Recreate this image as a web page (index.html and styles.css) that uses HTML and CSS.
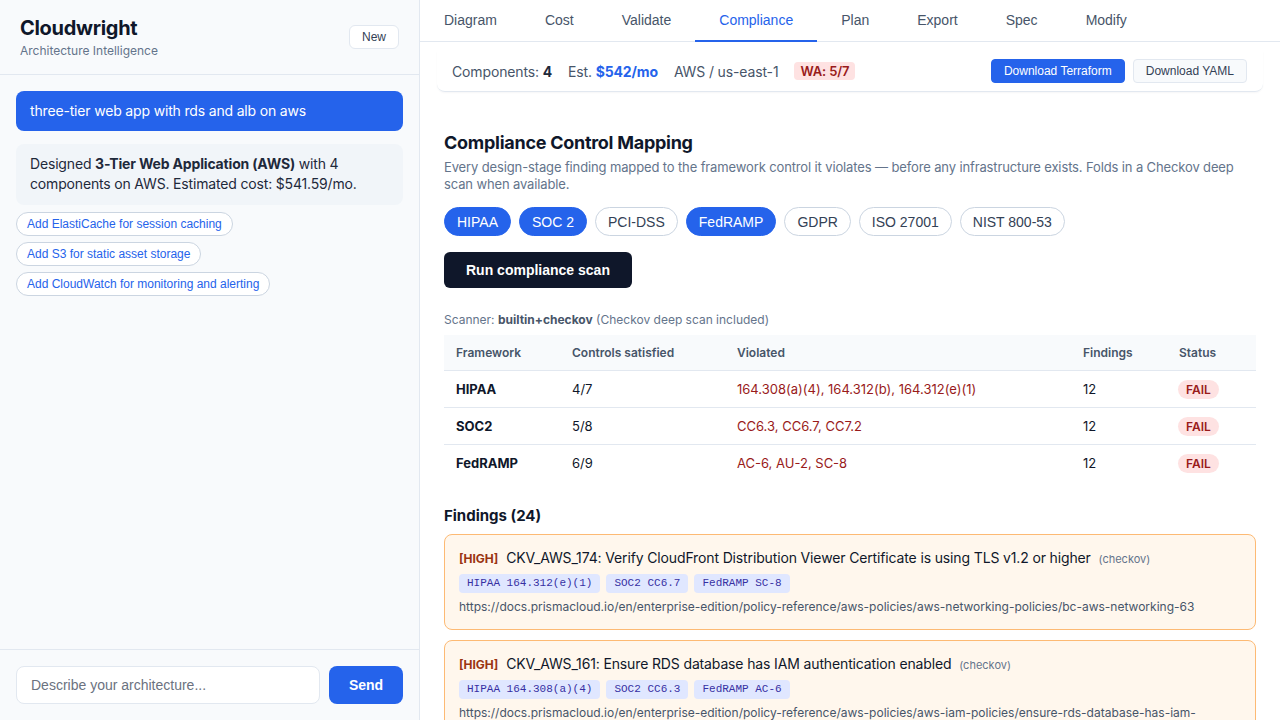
FILE: index.html
```html
<!DOCTYPE html>
<html lang="en">
<head>
  <meta charset="UTF-8" />
  <meta name="viewport" content="width=device-width, initial-scale=1.0" />
  <title>Cloudwright</title>
  <link rel="stylesheet" href="styles.css">
</head>
<body>
  <div class="app">
    <aside class="sidebar">
      <div class="side-head">
        <div>
          <div class="brand">Cloudwright</div>
          <div class="tagline">Architecture Intelligence</div>
        </div>
        <button class="btn-new">New</button>
      </div>

      <div class="messages">
        <div class="msg msg-user">three-tier web app with rds and alb on aws</div>
        <div class="msg msg-bot">Designed <strong>3-Tier Web Application (AWS)</strong> with 4 components on AWS. Estimated cost: $541.59/mo.</div>
        <div class="suggestions">
          <button class="suggest">Add ElastiCache for session caching</button>
          <button class="suggest">Add S3 for static asset storage</button>
          <button class="suggest">Add CloudWatch for monitoring and alerting</button>
        </div>
      </div>

      <form class="composer">
        <input type="text" placeholder="Describe your architecture..." />
        <button type="button" class="btn-send">Send</button>
      </form>
    </aside>

    <main class="main">
      <nav class="tabs">
        <button class="tab">Diagram</button>
        <button class="tab">Cost</button>
        <button class="tab">Validate</button>
        <button class="tab active">Compliance</button>
        <button class="tab">Plan</button>
        <button class="tab">Export</button>
        <button class="tab">Spec</button>
        <button class="tab">Modify</button>
      </nav>

      <div class="statbar">
        <div class="stats">
          <span>Components: <b>4</b></span>
          <span>Est. <b class="cost">$542/mo</b></span>
          <span>AWS / us-east-1</span>
          <span class="wa">WA: 5/7</span>
        </div>
        <div class="downloads">
          <button class="btn-dl primary">Download Terraform</button>
          <button class="btn-dl">Download YAML</button>
        </div>
      </div>

      <section class="panel">
        <h2>Compliance Control Mapping</h2>
        <p class="desc">Every design-stage finding mapped to the framework control it violates — before any infrastructure exists. Folds in a Checkov deep scan when available.</p>

        <div class="frameworks">
          <button class="fw on">HIPAA</button>
          <button class="fw on">SOC 2</button>
          <button class="fw">PCI-DSS</button>
          <button class="fw on">FedRAMP</button>
          <button class="fw">GDPR</button>
          <button class="fw">ISO 27001</button>
          <button class="fw">NIST 800-53</button>
        </div>

        <button class="btn-run">Run compliance scan</button>

        <p class="scanner">Scanner: <b>builtin+checkov</b> (Checkov deep scan included)</p>

        <table class="results">
          <thead>
            <tr>
              <th class="c1">Framework</th>
              <th class="c2">Controls satisfied</th>
              <th class="c3">Violated</th>
              <th class="c4">Findings</th>
              <th class="c5">Status</th>
            </tr>
          </thead>
          <tbody>
            <tr>
              <td class="name">HIPAA</td>
              <td>4/7</td>
              <td class="violated">164.308(a)(4), 164.312(b), 164.312(e)(1)</td>
              <td>12</td>
              <td><span class="fail">FAIL</span></td>
            </tr>
            <tr>
              <td class="name">SOC2</td>
              <td>5/8</td>
              <td class="violated">CC6.3, CC6.7, CC7.2</td>
              <td>12</td>
              <td><span class="fail">FAIL</span></td>
            </tr>
            <tr>
              <td class="name">FedRAMP</td>
              <td>6/9</td>
              <td class="violated">AC-6, AU-2, SC-8</td>
              <td>12</td>
              <td><span class="fail">FAIL</span></td>
            </tr>
          </tbody>
        </table>

        <h3>Findings (24)</h3>

        <div class="finding">
          <div class="f-title"><span class="sev">[HIGH]</span> CKV_AWS_174: Verify CloudFront Distribution Viewer Certificate is using TLS v1.2 or higher <span class="src">(checkov)</span></div>
          <div class="f-tags">
            <code>HIPAA 164.312(e)(1)</code>
            <code>SOC2 CC6.7</code>
            <code>FedRAMP SC-8</code>
          </div>
          <div class="f-url">https://docs.prismacloud.io/en/enterprise-edition/policy-reference/aws-policies/aws-networking-policies/bc-aws-networking-63</div>
        </div>

        <div class="finding">
          <div class="f-title"><span class="sev">[HIGH]</span> CKV_AWS_161: Ensure RDS database has IAM authentication enabled <span class="src">(checkov)</span></div>
          <div class="f-tags">
            <code>HIPAA 164.308(a)(4)</code>
            <code>SOC2 CC6.3</code>
            <code>FedRAMP AC-6</code>
          </div>
          <div class="f-url">https://docs.prismacloud.io/en/enterprise-edition/policy-reference/aws-policies/aws-iam-policies/ensure-rds-database-has-iam-authentication-enabled</div>
        </div>
      </section>
    </main>
  </div>
</body>
</html>
```

FILE: styles.css
```css
* {
  box-sizing: border-box;
}
html, body {
  margin: 0;
  padding: 0;
  height: 100%;
}
body {
  font-family: Inter, "Noto Sans", sans-serif;
  color: #0f172a;
  background: #fff;
  overflow: hidden;
}
button, input {
  font-family: "Liberation Sans", Arial, sans-serif;
}
.app {
  display: flex;
  height: 100vh;
}

/* sidebar */
.sidebar {
  width: 420px;
  flex-shrink: 0;
  background: #f8fafc;
  border-right: 1px solid #e2e8f0;
  display: flex;
  flex-direction: column;
}
.side-head {
  display: flex;
  justify-content: space-between;
  align-items: flex-start;
  padding: 16px 20px 15px;
  border-bottom: 1px solid #e2e8f0;
}
.brand {
  font-size: 20px;
  font-weight: 700;
  line-height: 24px;
  letter-spacing: -0.015em;
  color: #0f172a;
}
.tagline {
  font-size: 12px;
  line-height: 17px;
  color: #64748b;
  margin-top: 2px;
}
.btn-new {
  margin-top: 9px;
  background: #fff;
  border: 1px solid #e2e8f0;
  border-radius: 6px;
  padding: 4px 12px;
  font-size: 12px;
  color: #334155;
}
.messages {
  flex: 1;
  padding: 16px;
}
.msg {
  font-size: 14px;
  line-height: 20px;
  letter-spacing: -0.012em;
  border-radius: 8px;
  padding: 10px 14px;
}
.msg-user {
  background: #2563eb;
  color: #fff;
  margin-bottom: 13px;
}
.msg-bot {
  background: #f1f5f9;
  color: #1e293b;
  padding: 10px 14px 11px;
}
.suggestions {
  display: flex;
  flex-direction: column;
  align-items: flex-start;
  gap: 6px;
  margin-top: 7px;
}
.suggest {
  background: #fff;
  border: 1px solid #cbd5e1;
  border-radius: 12px;
  padding: 4px 10px;
  font-size: 12px;
  color: #2563eb;
}
.composer {
  display: flex;
  gap: 9px;
  padding: 16px;
  border-top: 1px solid #e2e8f0;
}
.composer input {
  flex: 1;
  height: 38px;
  border: 1px solid #e2e8f0;
  border-radius: 8px;
  padding: 0 14px;
  font-size: 14px;
  background: #fff;
  color: #0f172a;
}
.composer input::placeholder {
  color: #6b7280;
}
.btn-send {
  width: 74px;
  height: 38px;
  border: none;
  border-radius: 8px;
  background: #2563eb;
  color: #fff;
  font-size: 14px;
  font-weight: 700;
}

/* main */
.main {
  flex: 1;
  min-width: 0;
  display: flex;
  flex-direction: column;
  overflow: hidden;
}
.tabs {
  display: flex;
  height: 42px;
  border-bottom: 1px solid #e2e8f0;
  flex-shrink: 0;
}
.tab {
  background: none;
  border: none;
  border-bottom: 2px solid transparent;
  padding: 0 24px;
  height: 42px;
  font-size: 14px;
  color: #475569;
}
.tab.active {
  color: #2563eb;
  border-bottom-color: #2563eb;
}
.statbar {
  display: flex;
  justify-content: space-between;
  align-items: center;
  margin: 9px 17px 0 17px;
  padding: 8px 16px 8px 15px;
  border-bottom: 1px solid #e2e8f0;
  border-radius: 0 0 8px 8px;
  box-shadow: 0 1px 2px rgba(15, 23, 42, 0.04);
  flex-shrink: 0;
}
.stats {
  display: flex;
  align-items: center;
  gap: 16px;
  font-size: 14px;
  letter-spacing: -0.01em;
  color: #475569;
}
.stats b {
  color: #1e293b;
}
.stats .cost {
  color: #2563eb;
}
.wa {
  background: #fee2e2;
  color: #991b1b;
  font-size: 13px;
  font-weight: 600;
  padding: 1px 6px;
  border-radius: 4px;
}
.downloads {
  display: flex;
  gap: 8px;
}
.btn-dl {
  height: 24px;
  padding: 0 12px;
  font-size: 12px;
  border-radius: 4px;
  border: 1px solid #e2e8f0;
  background: #f8fafc;
  color: #334155;
}
.btn-dl.primary {
  background: #2563eb;
  border-color: #2563eb;
  color: #fff;
}

.panel {
  padding: 0 24px;
}
.panel h2 {
  font-size: 18px;
  line-height: 24px;
  font-weight: 700;
  letter-spacing: -0.015em;
  margin: 39px 0 4px;
  color: #0f172a;
}
.desc {
  font-size: 13px;
  line-height: 17px;
  letter-spacing: -0.01em;
  color: #64748b;
  margin: 0;
}
.frameworks {
  display: flex;
  gap: 8px;
  margin-top: 14px;
}
.fw {
  height: 29px;
  padding: 0 12px;
  border-radius: 999px;
  border: 1px solid #cbd5e1;
  background: #fff;
  color: #334155;
  font-size: 14px;
}
.fw.on {
  background: #2563eb;
  border-color: #2563eb;
  color: #fff;
}
.btn-run {
  display: block;
  margin-top: 16px;
  height: 36px;
  padding: 0 22px;
  border: none;
  border-radius: 6px;
  background: #0f172a;
  color: #fff;
  font-size: 14px;
  font-weight: 700;
}
.scanner {
  font-size: 12px;
  line-height: 16px;
  color: #64748b;
  margin: 24px 0 7px;
}
.scanner b {
  color: #475569;
}
.results {
  width: 100%;
  border-collapse: collapse;
  font-size: 13px;
}
.results th {
  background: #f8fafc;
  text-align: left;
  font-size: 12px;
  font-weight: 600;
  color: #475569;
  padding: 10px 12px;
  line-height: 15px;
  border-bottom: 1px solid #e2e8f0;
}
.results td {
  padding: 9px 12px 8px;
  line-height: 19px;
  border-bottom: 1px solid #e2e8f0;
  color: #0f172a;
}
.results tr:last-child td {
  border-bottom: none;
}
.c1 { width: 116px; }
.c2 { width: 165px; }
.c4 { width: 96px; }
.c5 { width: 89px; }
.results .name {
  font-weight: 700;
}
.results .violated {
  color: #991b1b;
}
.fail {
  display: inline-block;
  vertical-align: top;
  background: #fee2e2;
  color: #991b1b;
  font-size: 12px;
  font-weight: 600;
  line-height: 17px;
  padding: 1px 8px;
  border-radius: 999px;
  margin-left: -1px;
}
.panel h3 {
  font-size: 15px;
  line-height: 20px;
  font-weight: 700;
  margin: 25px 0 8px;
}
.finding {
  background: #fff7ed;
  border: 1px solid #fdba74;
  border-radius: 8px;
  padding: 13px 14px 14px;
  margin-bottom: 10px;
}
.f-title {
  font-size: 14px;
  line-height: 20px;
  letter-spacing: -0.01em;
  color: #0f172a;
}
.sev {
  font-size: 12px;
  font-weight: 700;
  letter-spacing: 0;
  color: #9a3412;
  margin-right: 4px;
}
.src {
  font-size: 11px;
  letter-spacing: 0;
  color: #64748b;
  margin-left: 4px;
}
.f-tags {
  display: flex;
  gap: 6px;
  margin-top: 5px;
}
.f-tags code {
  font-family: "Liberation Mono", "Courier New", monospace;
  font-size: 11px;
  line-height: 19px;
  padding: 0 8px;
  border-radius: 4px;
  background: #e0e7ff;
  color: #3730a3;
}
.f-url {
  font-size: 12px;
  line-height: 16px;
  color: #475569;
  margin-top: 6px;
  overflow-wrap: anywhere;
}
```
